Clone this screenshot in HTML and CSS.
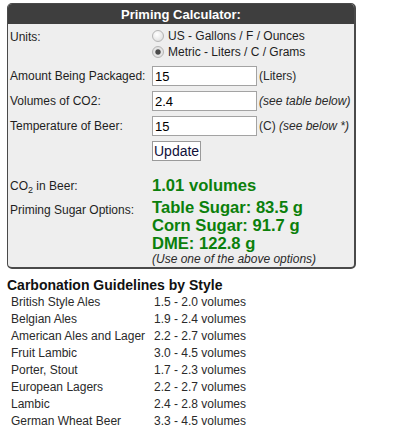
FILE: index.html
```html
<!DOCTYPE html>
<html>
<head>
<meta charset="utf-8">
<link rel="stylesheet" href="styles.css">
</head>
<body>
<div class="calc">
  <div class="calc-head">Priming Calculator:</div>
  <div class="calc-body">
    <div class="row row-units">
      <div class="label">Units:</div>
      <div class="field radios">
        <label class="radio-line"><input type="radio" name="units" class="radio"><span>US - Gallons / F / Ounces</span></label>
        <label class="radio-line"><input type="radio" name="units" class="radio" checked><span>Metric - Liters / C / Grams</span></label>
      </div>
    </div>
    <div class="row row-input first-input">
      <div class="label">Amount Being Packaged:</div>
      <div class="field"><input class="text" type="text" value="15"><span class="note">(Liters)</span></div>
    </div>
    <div class="row row-input">
      <div class="label">Volumes of CO2:</div>
      <div class="field"><input class="text" type="text" value="2.4"><span class="note"><i>(see table below)</i></span></div>
    </div>
    <div class="row row-input">
      <div class="label">Temperature of Beer:</div>
      <div class="field"><input class="text" type="text" value="15"><span class="note">(C) <i>(see below *)</i></span></div>
    </div>
    <div class="row row-input">
      <div class="label"></div>
      <div class="field"><button class="btn" type="button">Update</button></div>
    </div>
    <div class="row row-result co2-row">
      <div class="label">CO<sub>2</sub> in Beer:</div>
      <div class="field result">1.01 volumes</div>
    </div>
    <div class="row row-result sugar-row">
      <div class="label sugar-label">Priming Sugar Options:</div>
      <div class="field">
        <div class="result">Table Sugar: 83.5 g</div>
        <div class="result">Corn Sugar: 91.7 g</div>
        <div class="result">DME: 122.8 g</div>
        <div class="hint">(Use one of the above options)</div>
      </div>
    </div>
  </div>
</div>

<h3 class="guide-title">Carbonation Guidelines by Style</h3>
<div class="guide">
  <div>British Style Ales</div><div>1.5 - 2.0 volumes</div>
  <div>Belgian Ales</div><div>1.9 - 2.4 volumes</div>
  <div>American Ales and Lager</div><div>2.2 - 2.7 volumes</div>
  <div>Fruit Lambic</div><div>3.0 - 4.5 volumes</div>
  <div>Porter, Stout</div><div>1.7 - 2.3 volumes</div>
  <div>European Lagers</div><div>2.2 - 2.7 volumes</div>
  <div>Lambic</div><div>2.4 - 2.8 volumes</div>
  <div>German Wheat Beer</div><div>3.3 - 4.5 volumes</div>
</div>
</body>
</html>
```

FILE: styles.css
```css
html, body {
  margin: 0;
  padding: 0;
  background: #ffffff;
}
body {
  padding: 3px 0 0 7px;
  font-family: "Liberation Sans", Arial, sans-serif;
  font-size: 12px;
  color: #1e1e1e;
}
.calc {
  width: 349px;
  box-sizing: border-box;
  background: #eeeeee;
  border: 1px solid #4a4a4a;
  border-right-width: 2px;
  border-bottom-width: 2px;
  border-radius: 5px;
  overflow: hidden;
}
.calc-head {
  height: 20px;
  line-height: 21px;
  background: #3e3e3e;
  color: #ffffff;
  font-weight: bold;
  font-size: 13px;
  text-align: center;
}
.calc-body {
  padding: 0 0 1px 2px;
}
.row {
  display: grid;
  grid-template-columns: 142px 1fr;
}
.row-units {
  margin-top: 4px;
}
.radios {
  display: flex;
  flex-direction: column;
}
.radio-line {
  display: flex;
  align-items: center;
  height: 16px;
  line-height: 16px;
}
.row-units .label {
  line-height: 16px;
  padding-top: 1px;
}
.radio {
  appearance: none;
  -webkit-appearance: none;
  width: 12px;
  height: 12px;
  margin: 0 4px 0 0;
  border: 1px solid #b4b4b4;
  border-radius: 50%;
  background: radial-gradient(circle at 40% 35%, #ffffff 0%, #e8e8e8 60%, #d4d4d4 100%);
  box-sizing: border-box;
  position: relative;
}
.radio:checked {
  background: radial-gradient(circle, #4a4a4a 0 2.2px, #8a8a8a 2.6px, #e6e6e6 3.2px, #dcdcdc 100%);
}
.row-input {
  align-items: center;
  height: 20px;
  margin-top: 5px;
}
.first-input {
  margin-top: 6px;
}
.row-input .field {
  display: flex;
  align-items: center;
}
.text {
  box-sizing: border-box;
  width: 105px;
  height: 20px;
  margin: 0;
  padding: 0 2px;
  border: 1px solid #a3a3a3;
  background: #ffffff;
  font-family: "Liberation Sans", Arial, sans-serif;
  font-size: 13px;
  color: #000;
  outline: none;
}
.note {
  margin-left: 2px;
  color: #2a2a2a;
}
.btn {
  box-sizing: border-box;
  height: 20px;
  margin: 0;
  padding: 0 1px;
  border: 1px solid #9a9a9a;
  background: #ffffff;
  font-family: "Liberation Sans", Arial, sans-serif;
  font-size: 14px;
  color: #10103a;
  line-height: 18px;
}
.row-result {
  line-height: 18px;
}
.co2-row {
  margin-top: 16px;
}
.sugar-row {
  margin-top: 4px;
}
.sugar-label {
  padding-top: 2px;
}
sub {
  font-size: 9px;
  vertical-align: -3px;
  line-height: 0;
}
.result {
  color: #0b800b;
  font-weight: bold;
  font-size: 16.6px;
  line-height: 18px;
}
.hint {
  font-style: italic;
  font-size: 12px;
  line-height: 13px;
  color: #2a2a2a;
}
.guide-title {
  margin: 8px 0 0 0;
  font-size: 14px;
  line-height: 17px;
  font-weight: bold;
  color: #111;
}
.guide {
  display: grid;
  grid-template-columns: 143px auto;
  justify-content: start;
  padding-left: 4px;
  line-height: 17px;
  font-size: 12px;
  color: #2a2a2a;
}
```
